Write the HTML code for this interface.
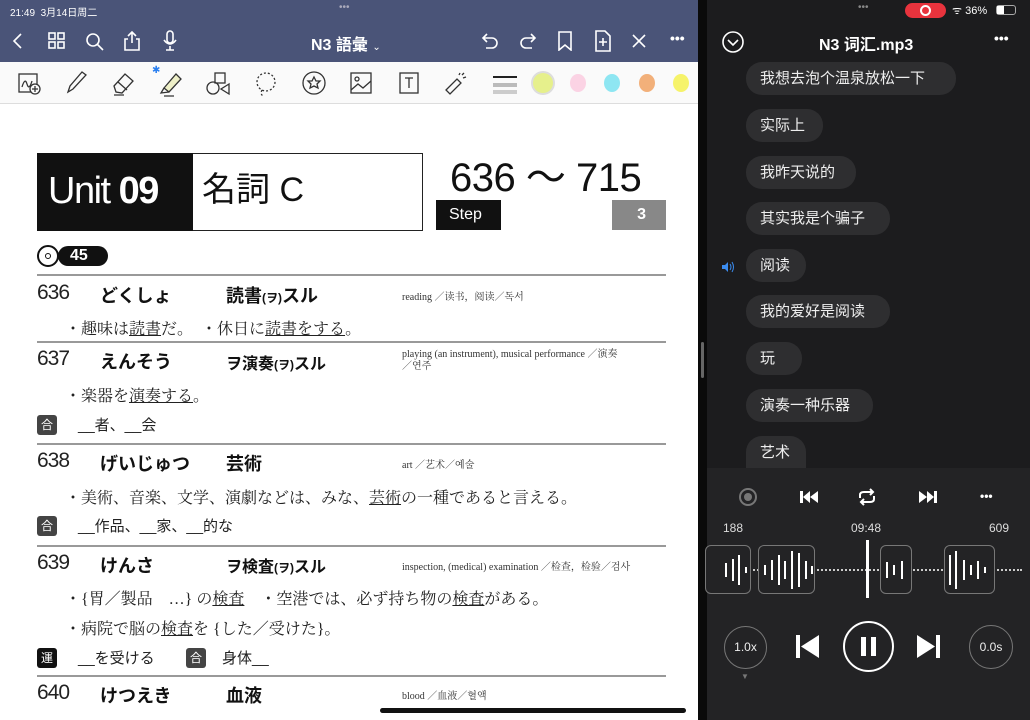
<!DOCTYPE html>
<html><head><meta charset="utf-8"><style>
*{margin:0;padding:0;box-sizing:border-box}
body{width:1030px;height:720px;overflow:hidden;background:#111;font-family:"Liberation Sans","Noto Sans CJK SC",sans-serif;position:relative}
.a{position:absolute;white-space:nowrap}
.js{font-family:"Liberation Sans","Noto Sans CJK JP",sans-serif}
.num{font-size:21px;color:#222;font-weight:300;letter-spacing:-1px}
.kana{font-size:18px;font-weight:bold;color:#111}
.en{font-size:10px;color:#333;font-family:"Liberation Serif","Noto Serif CJK SC",serif}
.ex{font-size:16px;color:#222;font-family:"Liberation Serif","Noto Serif CJK JP",serif}
.hr{position:absolute;left:37px;width:629px;height:2px;background:#999}
.tag{position:absolute;width:20px;height:20px;background:#444;color:#fff;font-size:12px;text-align:center;line-height:20px;border-radius:3px}
.bub{position:absolute;left:746px;height:33px;background:#2e2e30;border-radius:16px;color:#eee;font-size:15px;line-height:33px;padding:0 14px}
.ic{position:absolute;stroke:#fff;fill:none;stroke-width:1.6}
.tb{position:absolute;stroke:#333;fill:none;stroke-width:1.3}
</style></head><body>
<div class="a" style="left:0;top:0;width:698px;height:62px;background:#4a5478"></div>
<div class="a" style="left:10px;top:4px;color:#fff;font-size:10px">21:49 &nbsp;3月14日周二</div>
<div class="a" style="left:339px;top:2px;color:#aab;font-size:10px">•••</div>
<svg class="ic" style="left:10px;top:32px" width="16" height="18"><path d="M11 2 L4 9 L11 16"/></svg>
<svg class="ic" style="left:48px;top:32px" width="18" height="18"><rect x="1" y="1" width="6" height="6"/><rect x="10" y="1" width="6" height="6"/><rect x="1" y="10" width="6" height="6"/><rect x="10" y="10" width="6" height="6"/></svg>
<svg class="ic" style="left:85px;top:32px" width="20" height="20"><circle cx="8" cy="8" r="6"/><path d="M12.5 12.5 L18 18"/></svg>
<svg class="ic" style="left:123px;top:30px" width="18" height="22"><path d="M9 2 V13 M5 6 L9 2 L13 6 M5 9 H2 V20 H16 V9 H13"/></svg>
<svg class="ic" style="left:161px;top:30px" width="18" height="22"><rect x="6" y="1" width="6" height="12" rx="3"/><path d="M3 10 Q9 18 15 10 M9 16 V20 M5 20 H13"/></svg>
<div class="a" style="left:311px;top:31px;color:#fff;font-size:16px;font-weight:bold">N3 語彙 <span style="font-size:10px;font-weight:normal">⌄</span></div>
<svg class="ic" style="left:480px;top:32px" width="20" height="18"><path d="M4 6 H12 A5 5 0 0 1 12 16 H6 M7 2 L3 6 L7 10"/></svg>
<svg class="ic" style="left:518px;top:32px" width="20" height="18"><path d="M16 6 H8 A5 5 0 0 0 8 16 H14 M13 2 L17 6 L13 10"/></svg>
<svg class="ic" style="left:557px;top:31px" width="16" height="20"><path d="M2 1 H14 V19 L8 14 L2 19 Z"/></svg>
<svg class="ic" style="left:594px;top:30px" width="18" height="22"><path d="M2 1 H11 L16 6 V21 H2 Z M9 8 V16 M5 12 H13"/></svg>
<svg class="ic" style="left:631px;top:33px" width="16" height="16"><path d="M2 2 L14 14 M14 2 L2 14"/></svg>
<div class="a" style="left:670px;top:30px;color:#fff;font-size:14px;font-weight:bold">•••</div>
<div class="a" style="left:0;top:62px;width:698px;height:42px;background:#fafafa;border-bottom:1px solid #ddd"></div>
<svg class="tb" style="left:18px;top:72px" width="24" height="24"><rect x="1" y="2" width="18" height="18"/><path d="M4 15 Q7 5 9 12 T14 9"/><circle cx="17" cy="17" r="5" fill="#fafafa"/><path d="M17 14 V20 M14 17 H20"/></svg>
<svg class="tb" style="left:64px;top:70px" width="24" height="26"><path d="M4 22 L6 16 L18 2 L22 5 L9 19 Z"/></svg>
<svg class="tb" style="left:110px;top:70px" width="26" height="26"><path d="M4 16 L15 4 L23 11 L12 23 L6 22 Z M8 12 L17 20 M4 25 H14"/></svg>
<div class="a" style="left:152px;top:65px;color:#2a7ff0;font-size:10px">✱</div>
<svg class="tb" style="left:158px;top:70px" width="26" height="28"><path d="M6 18 L18 4 L23 9 L11 22 Z" fill="#eef0c8"/><path d="M6 18 L3 23 L11 22 M6 26 H16"/></svg>
<svg class="tb" style="left:206px;top:72px" width="26" height="24"><rect x="9" y="1" width="10" height="10"/><circle cx="7" cy="16" r="6"/><path d="M23 12 L15 17 L23 22 Z"/></svg>
<svg class="tb" style="left:254px;top:71px" width="24" height="26"><circle cx="12" cy="11" r="9" stroke-dasharray="2 2"/><path d="M8 19 Q6 23 9 25" stroke-dasharray="2 2"/></svg>
<svg class="tb" style="left:301px;top:71px" width="26" height="24"><circle cx="13" cy="12" r="11"/><path d="M13 6 L15 10 L19 10 L16 13 L17 17 L13 15 L9 17 L10 13 L7 10 L11 10 Z"/></svg>
<svg class="tb" style="left:350px;top:72px" width="22" height="22"><rect x="1" y="1" width="20" height="20"/><circle cx="7" cy="7" r="2"/><path d="M1 18 L8 12 L13 16 L21 9"/></svg>
<svg class="tb" style="left:397px;top:72px" width="24" height="22"><rect x="3" y="1" width="18" height="20"/><path d="M8 6 H16 M12 6 V16"/></svg>
<svg class="tb" style="left:443px;top:70px" width="26" height="26"><path d="M3 20 L14 9 L18 13 L7 24 Z M16 5 L17 3 M20 8 L23 7 M19 5 L21 3"/></svg>
<div class="a" style="left:493px;top:76px;width:24px;height:2px;background:#222"></div>
<div class="a" style="left:493px;top:83px;width:24px;height:4px;background:#bbb"></div>
<div class="a" style="left:493px;top:90px;width:24px;height:4px;background:#ccc"></div>
<div class="a" style="left:533px;top:73px;width:20px;height:20px;border-radius:50%;background:#e6f08c;box-shadow:0 0 0 2px #ddd"></div>
<div class="a" style="left:570px;top:74px;width:16px;height:18px;border-radius:50%;background:#fbd3e4"></div>
<div class="a" style="left:604px;top:74px;width:16px;height:18px;border-radius:50%;background:#8ee6f2"></div>
<div class="a" style="left:639px;top:74px;width:16px;height:18px;border-radius:50%;background:#f2b07a"></div>
<div class="a" style="left:673px;top:74px;width:16px;height:18px;border-radius:50%;background:#f6f36a"></div>
<div class="a" style="left:0;top:104px;width:698px;height:616px;background:#fff"></div>
<div class="a" style="left:37px;top:153px;width:386px;height:78px;border:1.5px solid #222;background:#fff"></div>
<div class="a" style="left:37px;top:153px;width:156px;height:78px;background:#111"></div>
<div class="a" style="left:48px;top:169px;color:#fff;font-size:38px;letter-spacing:-1.5px;line-height:44px">Unit <b>09</b></div>
<div class="a js" style="left:202px;top:168px;color:#111;font-size:34px;line-height:44px">名詞 C</div>
<div class="a" style="left:450px;top:154px;color:#111;font-size:40px;line-height:48px;letter-spacing:-0.5px">636 〜 715</div>
<div class="a" style="left:436px;top:200px;width:65px;height:30px;background:#111;color:#fff;font-size:16px;padding:6px 0 0 13px">Step</div>
<div class="a" style="left:612px;top:200px;width:54px;height:30px;background:#888;color:#fff;font-size:16px;font-weight:bold;text-align:right;padding:6px 20px 0 0">3</div>
<div class="a" style="left:37px;top:245px;width:22px;height:22px;border:2px solid #111;border-radius:50%"></div>
<div class="a" style="left:45px;top:253px;width:6px;height:6px;border:1.5px solid #111;border-radius:50%"></div>
<div class="a" style="left:58px;top:246px;width:50px;height:20px;background:#111;border-radius:10px;color:#fff;font-size:16px;font-weight:bold;padding-left:12px;line-height:20px">45</div>
<div class="hr" style="top:274px"></div>
<div class="a num" style="left:37px;top:281px">636</div>
<div class="a kana js" style="left:100px;top:282px">どくしょ</div>
<div class="a kana js" style="left:226px;top:282px">読書<span style="font-size:12px">(ヲ)</span>スル</div>
<div class="a en" style="left:402px;top:288px">reading ／读书，阅读／독서</div>
<div class="a ex" style="left:65px;top:316px">・趣味は<u>読書</u>だ。　・休日に<u>読書をする</u>。</div>
<div class="hr" style="top:341px"></div>
<div class="a num" style="left:37px;top:347px">637</div>
<div class="a kana js" style="left:100px;top:348px">えんそう</div>
<div class="a kana js" style="left:226px;top:350px;font-size:16px">ヲ演奏<span style="font-size:12px">(ヲ)</span>スル</div>
<div class="a en" style="left:402px;top:349px;line-height:12px">playing (an instrument), musical performance ／演奏<br>／연주</div>
<div class="a ex" style="left:65px;top:383px">・楽器を<u>演奏する</u>。</div>
<div class="tag js" style="left:37px;top:415px">合</div>
<div class="a js" style="left:78px;top:414px;font-size:15px;color:#222">__者、__会</div>
<div class="hr" style="top:443px"></div>
<div class="a num" style="left:37px;top:449px">638</div>
<div class="a kana js" style="left:100px;top:450px">げいじゅつ</div>
<div class="a kana js" style="left:226px;top:450px">芸術</div>
<div class="a en" style="left:402px;top:456px">art ／艺术／예술</div>
<div class="a ex" style="left:65px;top:485px">・美術、音楽、文学、演劇などは、みな、<u>芸術</u>の一種であると言える。</div>
<div class="tag js" style="left:37px;top:516px">合</div>
<div class="a js" style="left:78px;top:515px;font-size:15px;color:#222">__作品、__家、__的な</div>
<div class="hr" style="top:545px"></div>
<div class="a num" style="left:37px;top:551px">639</div>
<div class="a kana js" style="left:100px;top:552px">けんさ</div>
<div class="a kana js" style="left:226px;top:553px;font-size:16px">ヲ検査<span style="font-size:12px">(ヲ)</span>スル</div>
<div class="a en" style="left:402px;top:558px">inspection, (medical) examination ／检查，检验／검사</div>
<div class="a ex" style="left:65px;top:586px">・{胃／製品　…} の<u>検査</u>　・空港では、必ず持ち物の<u>検査</u>がある。</div>
<div class="a ex" style="left:65px;top:616px">・病院で脳の<u>検査</u>を {した／受けた}。</div>
<div class="tag js" style="left:37px;top:648px;background:#111">運</div>
<div class="a js" style="left:78px;top:647px;font-size:15px;color:#222">__を受ける</div>
<div class="tag js" style="left:186px;top:648px">合</div>
<div class="a js" style="left:222px;top:647px;font-size:15px;color:#222">身体__</div>
<div class="hr" style="top:675px"></div>
<div class="a num" style="left:37px;top:681px">640</div>
<div class="a kana js" style="left:100px;top:682px">けつえき</div>
<div class="a kana js" style="left:226px;top:682px">血液</div>
<div class="a en" style="left:402px;top:687px">blood ／血液／혈액</div>
<div class="a" style="left:380px;top:708px;width:306px;height:5px;background:#111;border-radius:3px"></div>
<div class="a" style="left:698px;top:0;width:9px;height:720px;background:#0a0a0a"></div>
<div class="a" style="left:701px;top:342px;width:3px;height:36px;background:#666;border-radius:2px"></div>
<div class="a" style="left:707px;top:0;width:323px;height:468px;background:#1c1c1e"></div>
<div class="a" style="left:858px;top:2px;color:#888;font-size:10px">•••</div>
<div class="a" style="left:905px;top:3px;width:41px;height:15px;background:#e8333d;border-radius:8px"></div>
<div class="a" style="left:920px;top:5px;width:11px;height:11px;border:2px solid #fff;border-radius:50%"></div>
<div class="a" style="left:952px;top:3px;color:#fff;font-size:11px">ᯤ 36%</div>
<div class="a" style="left:996px;top:5px;width:20px;height:10px;border:1px solid #aaa;border-radius:3px"><div style="width:7px;height:8px;background:#fff"></div></div>
<svg class="ic" style="left:721px;top:30px" width="24" height="24"><circle cx="12" cy="12" r="10"/><path d="M7 10 L12 15 L17 10"/></svg>
<div class="a" style="left:819px;top:31px;color:#fff;font-size:16px;font-weight:bold">N3 词汇.mp3</div>
<div class="a" style="left:994px;top:30px;color:#fff;font-size:14px;font-weight:bold">•••</div>
<div class="bub" style="top:62px;width:210px">我想去泡个温泉放松一下</div>
<div class="bub" style="top:109px;width:77px">实际上</div>
<div class="bub" style="top:156px;width:110px">我昨天说的</div>
<div class="bub" style="top:202px;width:144px">其实我是个骗子</div>
<svg class="a" style="left:721px;top:261px" width="14" height="12"><path d="M1 4 H4 L7 1 V11 L4 8 H1 Z" fill="#3b8cf0"/><path d="M9 3 Q11 6 9 9 M11 1 Q14 6 11 11" stroke="#3b8cf0" fill="none"/></svg>
<div class="bub" style="top:249px;width:60px">阅读</div>
<div class="bub" style="top:295px;width:144px">我的爱好是阅读</div>
<div class="bub" style="top:342px;width:56px">玩</div>
<div class="bub" style="top:389px;width:127px">演奏一种乐器</div>
<div class="bub" style="top:436px;height:32px;width:60px;border-radius:16px 16px 0 0">艺术</div>
<div class="a" style="left:707px;top:468px;width:323px;height:252px;background:#232325"></div>
<div class="a" style="left:739px;top:488px;width:18px;height:18px;border:2px solid #777;border-radius:50%"></div>
<div class="a" style="left:744px;top:493px;width:8px;height:8px;background:#777;border-radius:50%"></div>
<svg class="a" style="left:800px;top:490px" width="18" height="14" fill="#fff"><rect x="0" y="1" width="3" height="12"/><path d="M10 1 V13 L3 7 Z M18 1 V13 L10 7 Z"/></svg>
<svg class="a" style="left:856px;top:487px" width="22" height="20" stroke="#fff" stroke-width="2" fill="none"><path d="M4 11 V8 Q4 5 8 5 H17 M14 2 L17 5 L14 8 M18 9 V12 Q18 15 14 15 H5 M8 12 L5 15 L8 18"/></svg>
<svg class="a" style="left:919px;top:490px" width="18" height="14" fill="#fff"><path d="M0 1 V13 L8 7 Z M8 1 V13 L15 7 Z"/><rect x="15" y="1" width="3" height="12"/></svg>
<div class="a" style="left:980px;top:489px;color:#fff;font-size:12px;font-weight:bold">•••</div>
<div class="a" style="left:723px;top:521px;color:#ddd;font-size:12px">188</div>
<div class="a" style="left:851px;top:521px;color:#ddd;font-size:12px">09:48</div>
<div class="a" style="left:989px;top:521px;color:#ddd;font-size:12px">609</div>
<div class="a" style="left:722px;top:569px;width:300px;border-top:2px dotted #ccc"></div>
<div class="a" style="left:705px;top:545px;width:46px;height:49px;border:1px solid #777;border-radius:6px;background:#232325"></div>
<div class="a" style="left:758px;top:545px;width:57px;height:49px;border:1px solid #777;border-radius:6px;background:#232325"></div>
<div class="a" style="left:880px;top:545px;width:32px;height:49px;border:1px solid #777;border-radius:6px;background:#232325"></div>
<div class="a" style="left:944px;top:545px;width:51px;height:49px;border:1px solid #777;border-radius:6px;background:#232325"></div>
<svg class="a" style="left:722px;top:545px" width="290" height="50" stroke="#fff" stroke-width="2">
<path d="M4 18 V32 M11 14 V36 M17 10 V40 M24 22 V28 M43 20 V30 M50 15 V35 M57 10 V40 M63 16 V34 M70 6 V44 M77 8 V42 M84 16 V34 M90 21 V29 M165 17 V33 M172 20 V30 M180 16 V34 M228 10 V40 M234 6 V44 M242 15 V35 M249 20 V30 M256 16 V34 M263 22 V28"/>
</svg>
<div class="a" style="left:866px;top:540px;width:3px;height:58px;background:#fff"></div>
<div class="a" style="left:724px;top:626px;width:43px;height:43px;border:1px solid #777;border-radius:50%;color:#eee;font-size:12px;text-align:center;line-height:41px">1.0x</div>
<div class="a" style="left:741px;top:672px;color:#777;font-size:8px">▼</div>
<svg class="a" style="left:796px;top:635px" width="24" height="24" fill="#fff"><rect x="0" y="0" width="4" height="23"/><path d="M23 0 V23 L5 11.5 Z"/></svg>
<div class="a" style="left:843px;top:621px;width:51px;height:51px;border:2px solid #fff;border-radius:50%"></div>
<div class="a" style="left:861px;top:637px;width:5px;height:19px;background:#fff"></div>
<div class="a" style="left:871px;top:637px;width:5px;height:19px;background:#fff"></div>
<svg class="a" style="left:917px;top:635px" width="24" height="24" fill="#fff"><path d="M0 0 V23 L18 11.5 Z"/><rect x="19" y="0" width="4" height="23"/></svg>
<div class="a" style="left:969px;top:625px;width:44px;height:44px;border:1px solid #777;border-radius:50%;color:#eee;font-size:12px;text-align:center;line-height:42px">0.0s</div>
</body></html>
